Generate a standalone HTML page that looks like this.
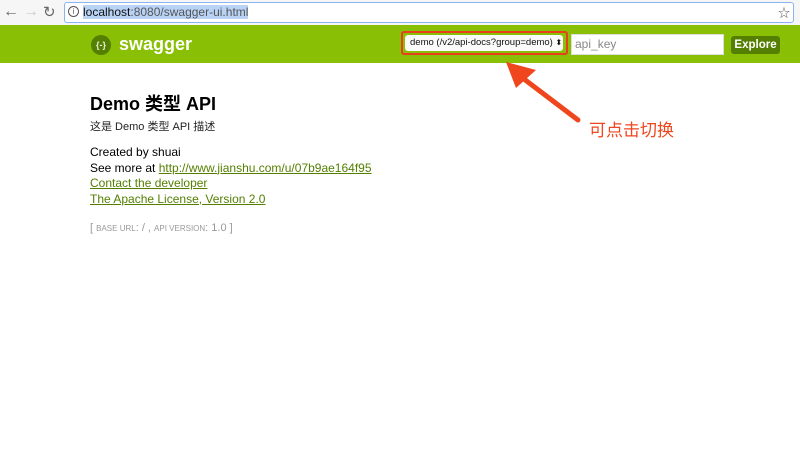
<!DOCTYPE html>
<html><head><meta charset="utf-8"><style>
*{margin:0;padding:0;box-sizing:border-box}
body{width:800px;height:458px;overflow:hidden;background:#fff;font-family:"Liberation Sans","Noto Sans CJK SC",sans-serif;position:relative}
.abs{position:absolute;white-space:nowrap}
a{color:#547f00}
</style></head><body>
<div class="abs" style="left:0;top:0;width:800px;height:25px;background:#f6f6f6"></div>
<div class="abs" style="left:3px;top:3px;font-size:16px;color:#666">&#8592;</div>
<div class="abs" style="left:23px;top:3px;font-size:16px;color:#ccc">&#8594;</div>
<div class="abs" style="left:43px;top:3px;font-size:15px;color:#666">&#8635;</div>
<div class="abs" style="left:64px;top:2px;width:730px;height:21px;border:1.5px solid #8ab4f0;border-radius:3px;background:#fff"></div>
<div class="abs" style="left:68px;top:6px;width:11px;height:11px;border:1.3px solid #555;border-radius:50%;font-size:8px;line-height:9px;text-align:center;color:#555">i</div>
<div class="abs" style="left:83px;top:5px;font-size:12px;line-height:14px;background:#b9d3f7;color:#555"><span style="color:#111">localhost</span>:8080/swagger-ui.html</div>
<div class="abs" style="left:778px;top:4px;font-size:12px;color:#555">☆</div>
<div class="abs" style="left:0;top:25px;width:800px;height:38px;background:#89bf04"></div>
<div class="abs" style="left:91px;top:35px;width:20px;height:20px;border-radius:50%;background:#547f00;color:#e8f0d8;font-size:9px;line-height:20px;text-align:center;font-weight:bold">{-}</div>
<div class="abs" style="left:119px;top:34px;font-size:18px;font-weight:bold;color:#fff">swagger</div>
<div class="abs" style="left:401px;top:31px;width:167px;height:24px;border:2px solid #e8401c;border-radius:3px"></div>
<div class="abs" style="left:405px;top:35px;width:158px;height:16px;background:#fafafa;border-radius:3px;font-size:9.5px;line-height:16px;padding-left:5px;color:#111">demo (/v2/api-docs?group=demo) <span style="font-size:8px">⬍</span></div>
<div class="abs" style="left:571px;top:34px;width:153px;height:21px;background:#fff;border:1px solid #ddd;font-size:12px;line-height:19px;padding-left:3px;color:#888">api_key</div>
<div class="abs" style="left:731px;top:36px;width:49px;height:18px;background:#547f00;border-radius:3px;color:#fff;font-weight:bold;font-size:11.5px;line-height:18px;text-align:center">Explore</div>
<svg class="abs" style="left:0;top:0" width="800" height="458"><line x1="578" y1="120" x2="520" y2="76" stroke="#f0461e" stroke-width="5" stroke-linecap="round"/><polygon points="506,62 536,70 516,88" fill="#f0461e"/></svg>
<div class="abs" style="left:589px;top:116px;font-size:17px;color:#f0461e;font-family:'Noto Sans CJK SC',sans-serif">可点击切换</div>
<div class="abs" style="left:90px;top:90px;font-size:18px;font-weight:bold;color:#000">Demo 类型 API</div>
<div class="abs" style="left:90px;top:118px;font-size:11px;color:#222">这是 Demo 类型 API 描述</div>
<div class="abs" style="left:90px;top:145px;font-size:12px;line-height:15.5px;color:#000">Created by shuai<br>See more at <a href="#">http://www.jianshu.com/u/07b9ae164f95</a><br><a href="#">Contact the developer</a><br><a href="#">The Apache License, Version 2.0</a></div>
<div class="abs" style="left:90px;top:222px;font-size:11px;color:#999">[ <span style="font-size:8px">BASE URL</span>: / , <span style="font-size:8px">API VERSION</span>: 1.0 ]</div>
</body></html>
